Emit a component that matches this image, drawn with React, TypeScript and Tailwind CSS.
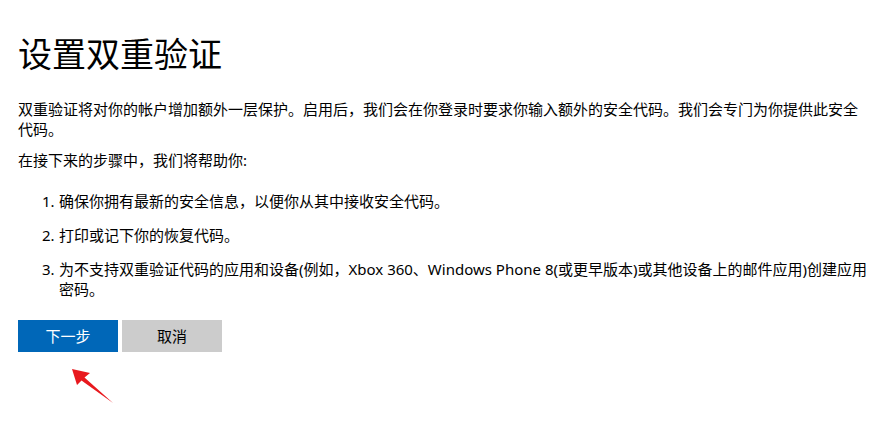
export default function App() {
  const font = {
    fontFamily: '"Segoe UI", "Noto Sans", "Noto Sans CJK SC", sans-serif',
  };
  return (
    <div className="relative w-[884px] h-[434px] bg-white text-black overflow-hidden" style={font}>
      <div className="px-[18px] pt-[34px] w-[884px]">
        <h1 className="text-[34px] leading-[40px] font-normal tracking-[0px]">设置双重验证</h1>
        <p className="mt-[25px] text-[15px] leading-[20px]">
          双重验证将对你的帐户增加额外一层保护。启用后，我们会在你登录时要求你输入额外的安全代码。我们会专门为你提供此安全代码。
        </p>
        <p className="mt-[11px] text-[15px] leading-[20px]">在接下来的步骤中，我们将帮助你:</p>
        <ol className="mt-[21px] pl-[41px] -mr-[12px] text-[15px] leading-[20px] flex flex-col gap-[14px]">
          <li className="flex">
            <span className="w-0 -ml-[17px] mr-[17px] whitespace-nowrap">1.</span>
            <span>确保你拥有最新的安全信息，以便你从其中接收安全代码。</span>
          </li>
          <li className="flex">
            <span className="w-0 -ml-[17px] mr-[17px] whitespace-nowrap">2.</span>
            <span>打印或记下你的恢复代码。</span>
          </li>
          <li className="flex">
            <span className="w-0 -ml-[17px] mr-[17px] whitespace-nowrap">3.</span>
            <span>为不支持双重验证代码的应用和设备(例如，Xbox 360、Windows Phone 8(或更早版本)或其他设备上的邮件应用)创建应用密码。</span>
          </li>
        </ol>
        <div className="mt-[21px] flex gap-[4px]">
          <button className="w-[100px] h-[32px] bg-[#0067b8] text-white text-[15px] leading-[20px]">下一步</button>
          <button className="w-[100px] h-[32px] bg-[#cccccc] text-black text-[15px] leading-[20px]">取消</button>
        </div>
      </div>
      <svg className="absolute left-0 top-0 pointer-events-none" width="884" height="434" viewBox="0 0 884 434">
        <polygon
          points="72,369 90,373 84.5,377.5 113,403 81.5,380.5 77,385"
          fill="#e8191e"
        />
      </svg>
    </div>
  );
}
